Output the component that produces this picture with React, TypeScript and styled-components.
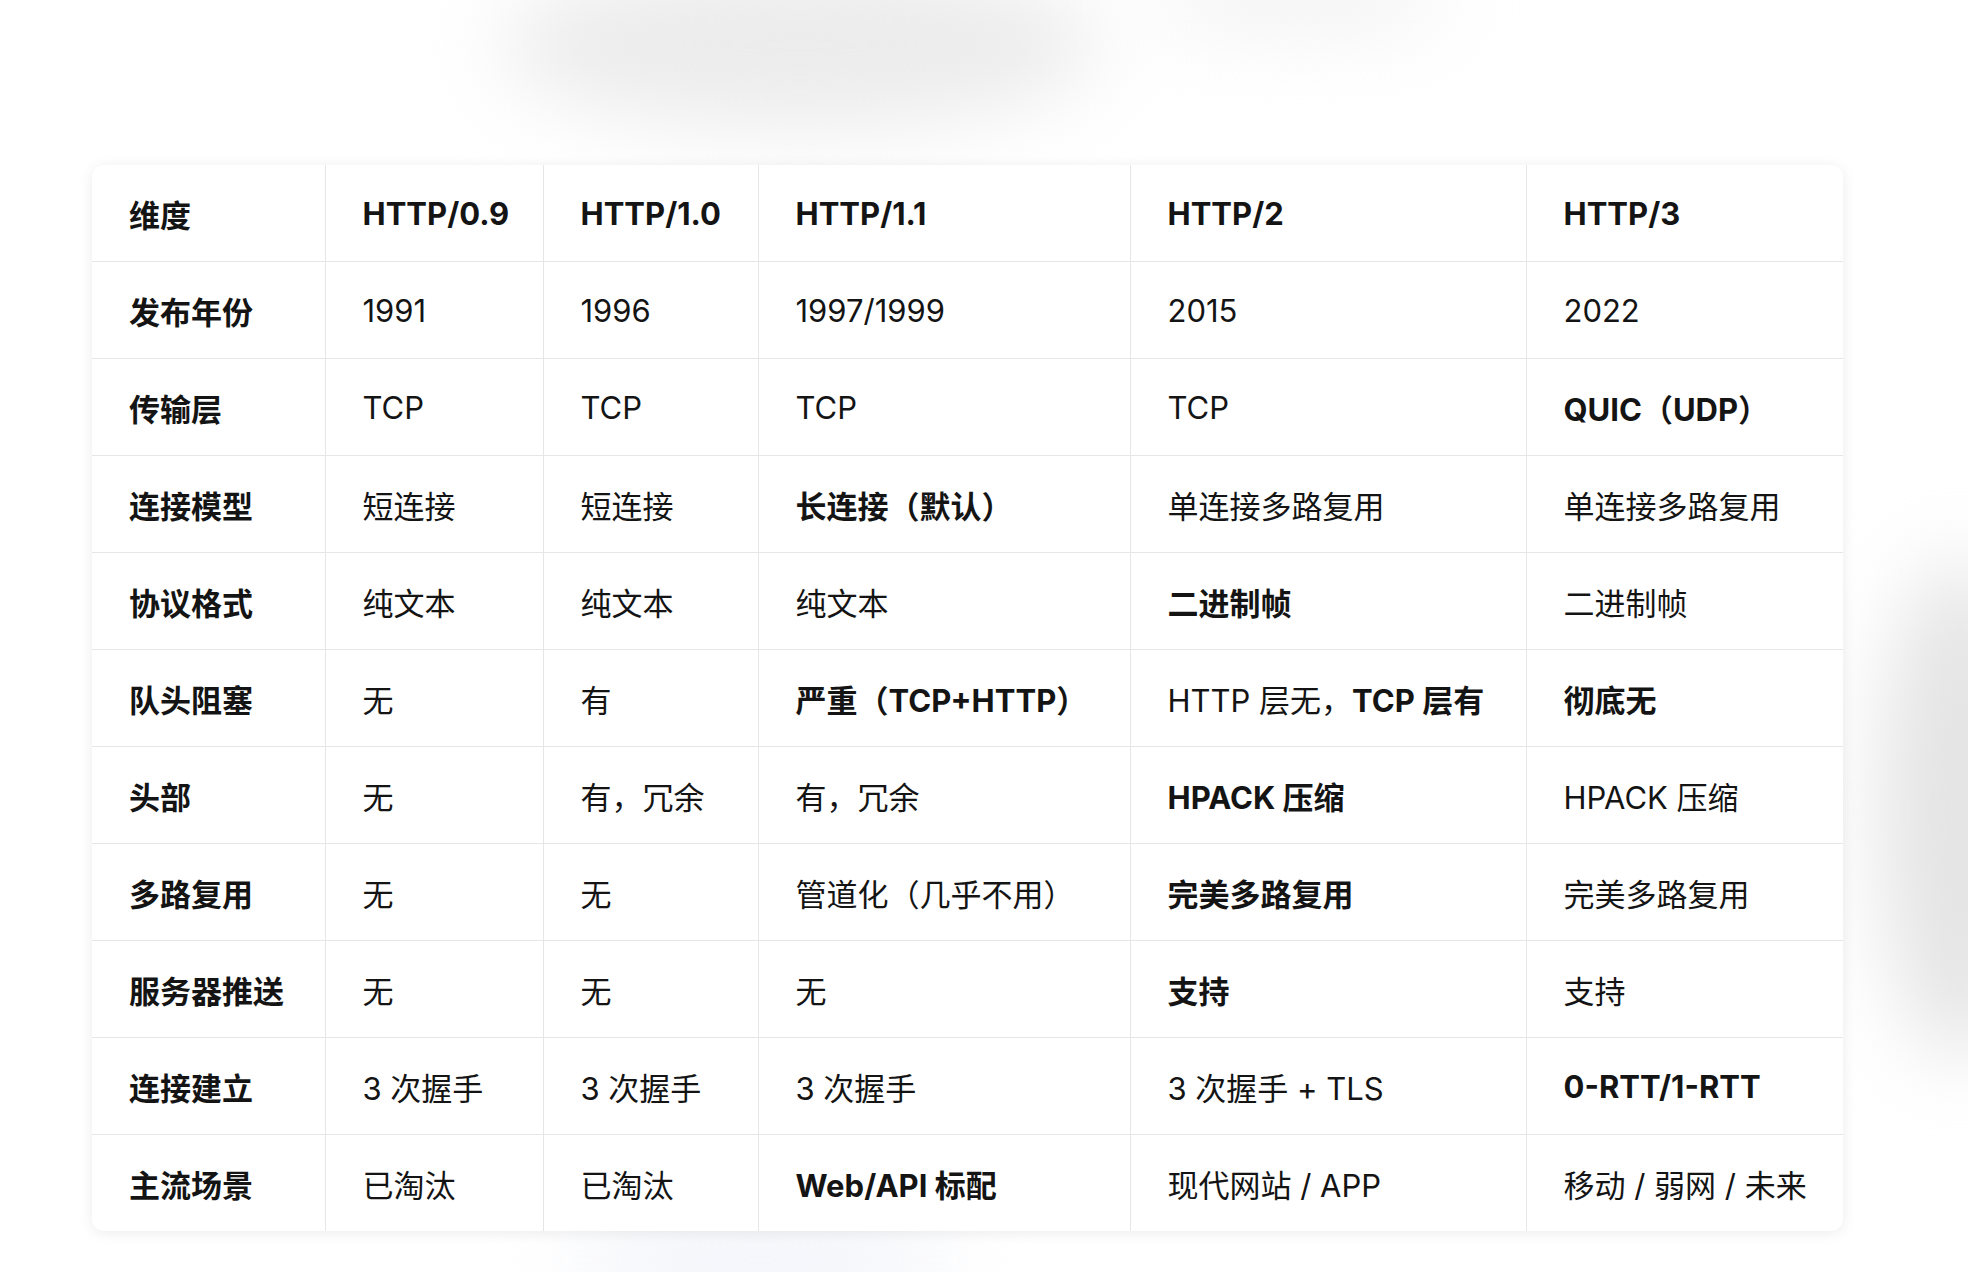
import React from 'react';
import styled, { createGlobalStyle } from 'styled-components';

const Global = createGlobalStyle`
  html, body { margin: 0; background: #fff; }
  body { font-family: Inter, "Noto Sans CJK SC", sans-serif; color: #141414; }
`;

const Page = styled.div`
  position: relative;
  width: 1968px;
  height: 1272px;
  overflow: hidden;
  padding: 165px 0 0 92px;
  box-sizing: border-box;
`;

const Blob = styled.div<{ $l: number; $t: number; $w: number; $h: number; $c: string }>`
  position: absolute;
  left: ${(p) => p.$l}px;
  top: ${(p) => p.$t}px;
  width: ${(p) => p.$w}px;
  height: ${(p) => p.$h}px;
  background: ${(p) => p.$c};
  filter: blur(40px);
  border-radius: 50%;
`;

const Card = styled.div`
  position: relative;
  width: 1751px;
  background: #fff;
  border-radius: 12px;
  box-shadow: 0 2px 14px rgba(0, 0, 0, 0.08);
  overflow: hidden;
`;

const Table = styled.table`
  border-collapse: collapse;
  width: 100%;
  table-layout: fixed;
`;

const Cell = styled.td<{ $b?: boolean }>`
  height: 96px;
  padding: 0 0 0 37px;
  font-size: 31px;
  font-weight: ${(p) => (p.$b ? 700 : 400)};
  border-right: 1.5px solid #e6e6e6;
  border-bottom: 1.5px solid #e6e6e6;
  white-space: nowrap;
  &:last-child { border-right: none; }
  tr:last-child & { border-bottom: none; }
`;

const widths = [233, 218, 215, 372, 396, 317];

const rows: string[][] = [
  ['维度', '*HTTP/0.9', '*HTTP/1.0', '*HTTP/1.1', '*HTTP/2', '*HTTP/3'],
  ['发布年份', '1991', '1996', '1997/1999', '2015', '2022'],
  ['传输层', 'TCP', 'TCP', 'TCP', 'TCP', '*QUIC（UDP）'],
  ['连接模型', '短连接', '短连接', '*长连接（默认）', '单连接多路复用', '单连接多路复用'],
  ['协议格式', '纯文本', '纯文本', '纯文本', '*二进制帧', '二进制帧'],
  ['队头阻塞', '无', '有', '*严重（TCP+HTTP）', 'MIX', '*彻底无'],
  ['头部', '无', '有，冗余', '有，冗余', '*HPACK 压缩', 'HPACK 压缩'],
  ['多路复用', '无', '无', '管道化（几乎不用）', '*完美多路复用', '完美多路复用'],
  ['服务器推送', '无', '无', '无', '*支持', '支持'],
  ['连接建立', '3 次握手', '3 次握手', '3 次握手', '3 次握手 + TLS', '*0-RTT/1-RTT'],
  ['主流场景', '已淘汰', '已淘汰', '*Web/API 标配', '现代网站 / APP', '移动 / 弱网 / 未来'],
];

export default function App() {
  return (
    <Page>
      <Global />
      <Blob $l={500} $t={-40} $w={600} $h={170} $c="#ececec" />
      <Blob $l={1150} $t={-30} $w={300} $h={60} $c="#f0f0f0" />
      <Blob $l={1880} $t={560} $w={160} $h={500} $c="#e4e4e4" />
      <Blob $l={560} $t={1230} $w={400} $h={60} $c="#eef0f8" />
      <Card>
        <Table>
          <colgroup>
            {widths.map((w, i) => (
              <col key={i} style={{ width: w }} />
            ))}
          </colgroup>
          <tbody>
            {rows.map((r, i) => (
              <tr key={i}>
                {r.map((c, j) =>
                  c === 'MIX' ? (
                    <Cell key={j}>
                      HTTP 层无，<b>TCP 层有</b>
                    </Cell>
                  ) : (
                    <Cell key={j} $b={j === 0 || c.startsWith('*')}>
                      {c.replace(/^\*/, '')}
                    </Cell>
                  )
                )}
              </tr>
            ))}
          </tbody>
        </Table>
      </Card>
    </Page>
  );
}
